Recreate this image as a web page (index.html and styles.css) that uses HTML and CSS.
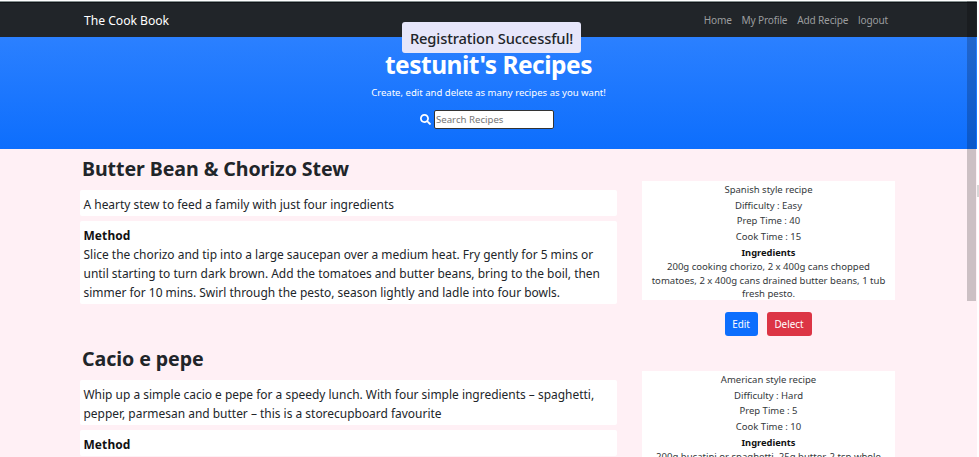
FILE: index.html
```html
<!DOCTYPE html>
<html lang="en">
<head>
<meta charset="utf-8">
<title>The Cook Book</title>
<link rel="stylesheet" href="styles.css">
</head>
<body>
<div class="page">
  <nav class="navbar">
    <a class="brand">The Cook Book</a>
    <div class="links"><a class="home">Home</a><a class="profile">My Profile</a><a class="add">Add Recipe</a><a class="logout">logout</a></div>
  </nav>
  <header class="hero">
    <h1><span>testunit's Recipes</span></h1>
    <p><span>Create, edit and delete as many recipes as you want!</span></p>
    <form class="search">
      <svg viewBox="0 0 512 512"><path d="M505 442.7L405.3 343c-4.5-4.5-10.6-7-17-7H372c27.600-35.300 44-79.700 44-128C416 93.100 322.900 0 208 0S0 93.100 0 208s93.100 208 208 208c48.300 0 92.700-16.400 128-44v16.300c0 6.400 2.500 12.500 7 17l99.700 99.700c9.400 9.400 24.600 9.400 33.900 0l28.300-28.300c9.400-9.400 9.400-24.600.1-34zM208 336c-70.700 0-128-57.200-128-128 0-70.700 57.200-128 128-128 70.700 0 128 57.200 128 128 0 70.700-57.200 128-128 128z"/></svg>
      <input type="text" placeholder="Search Recipes">
    </form>
  </header>
  <div class="flash"><span>Registration Successful!</span></div>
  <main>
    <section class="recipe first">
      <div class="main-col">
        <h2><span>Butter Bean &amp; Chorizo Stew</span></h2>
        <div class="box intro"><span>A hearty stew to feed a family with just four ingredients</span></div>
        <div class="box method"><b>Method</b><br><span>Slice the chorizo and tip into a large saucepan over a medium heat. Fry gently for 5 mins or</span><br><span>until starting to turn dark brown. Add the tomatoes and butter beans, bring to the boil, then</span><br><span>simmer for 10 mins. Swirl through the pesto, season lightly and ladle into four bowls.</span></div>
      </div>
      <aside>
        <div class="card">
          <p>Spanish style recipe</p><p>Difficulty : Easy</p><p>Prep Time : 40</p><p>Cook Time : 15</p>
          <h3>Ingredients</h3>
          <div class="ingredients"><span>200g cooking chorizo, 2 x 400g cans chopped</span><br><span>tomatoes, 2 x 400g cans drained butter beans, 1 tub</span><br><span>fresh pesto.</span></div>
        </div>
        <div class="buttons"><a class="btn edit">Edit</a><a class="btn delete">Delect</a></div>
      </aside>
    </section>
    <section class="recipe">
      <div class="main-col">
        <h2><span>Cacio e pepe</span></h2>
        <div class="box intro"><span>Whip up a simple cacio e pepe for a speedy lunch. With four simple ingredients – spaghetti,</span><br><span>pepper, parmesan and butter – this is a storecupboard favourite</span></div>
        <div class="box method"><b>Method</b></div>
      </div>
      <aside>
        <div class="card">
          <p>American style recipe</p><p>Difficulty : Hard</p><p>Prep Time : 5</p><p>Cook Time : 10</p>
          <h3>Ingredients</h3>
          <div class="ingredients"><span>200g bucatini or spaghetti, 25g butter, 2 tsp whole</span></div>
        </div>
      </aside>
    </section>
  </main>
  <div class="scrollbar"></div>
</div>
<div class="edge-mark"></div>
</body>
</html>
```

FILE: styles.css
```css
* { box-sizing: border-box; }
html, body { margin: 0; height: 457px; overflow: hidden; }
body { background: #fff; font-family: "Noto Sans", sans-serif; color: #212529; }
.page { position: relative; width: 977px; height: 457px; overflow: hidden; background: #fff0f5; white-space: nowrap; }
h1, h2, h3, p { margin: 0; }

.navbar { height: 37px; border-top: 1px solid #fff; background: #212529; box-shadow: inset 0 1px #879191, inset 0 2px #111518; display: flex; justify-content: space-between; align-items: center; padding: 2px 89px 0 84px; color: #fff; }
.brand { font-size: 12.2px; letter-spacing: -0.05px; }
.links { display: flex; gap: 9.8px; font-size: 10.1px; letter-spacing: -0.17px; color: #9b9d9f; }

.hero { height: 112px; background: linear-gradient(#2b80ff, #0d6efd); color: #fff; text-align: center; padding-top: 11px; }
.hero h1 { font-size: 24.5px; letter-spacing: -0.5px; line-height: 33px; font-weight: 700; }
.hero p { font-size: 9.55px; line-height: 14px; margin-top: 5px; }
.search { display: flex; align-items: center; margin: 10px 0 0 420px; }
.search svg { width: 11px; height: 11px; fill: #fff; margin-right: 3px; }
.search input { width: 120px; height: 19px; border: 1px solid #333; border-radius: 2px; padding: 0 1px; background: #fff; font: 9.65px "Noto Sans", sans-serif; }
.search input::placeholder { color: #757575; opacity: 1; }

.flash { position: absolute; left: 402px; top: 22px; width: 179px; height: 31px; border-radius: 3px; background: #e6e6fa; font-size: 14.7px; letter-spacing: -0.13px; font-weight: 500; line-height: 32px; text-align: center; }

.recipe { display: flex; height: 190px; padding-left: 80px; }
.main-col { width: 537px; margin-right: 25px; }
h2 { font-size: 19.6px; letter-spacing: -0.08px; line-height: 26px; padding: 7px 0 0 2px; height: 41.4px; }
.box { background: #fff; border-radius: 2px; padding: 5.1px 3.5px 1.7px; font-size: 11.96px; line-height: 19px; }
.box b { color: #111; letter-spacing: 0.1px; }
.intro { margin-bottom: 5px; }
aside { width: 253px; padding-top: 32px; }
.card { background: #fff; height: 119px; padding-top: 1px; text-align: center; font-size: 9.5px; color: #34383b; }
.card p { line-height: 15.7px; }
.card h3 { font-size: 9.3px; line-height: 15px; color: #111; }
.ingredients { font-size: 9.55px; line-height: 13.7px; }
.buttons { display: flex; justify-content: center; gap: 9px; margin: 12px 1px 0 0; }
.btn { height: 24px; line-height: 25px; border-radius: 3px; color: #fff; font-size: 9.9px; text-align: center; }
.edit { width: 33px; background: #0d6efd; }
.delete { width: 45px; background: #dc3545; }
.scrollbar { position: absolute; left: 967px; top: 1px; width: 9px; height: 300px; background: rgba(0, 0, 0, .2); }
.edge-mark { position: absolute; left: 977px; top: 185px; width: 2px; height: 12px; background: #d8d8d8; }
```
